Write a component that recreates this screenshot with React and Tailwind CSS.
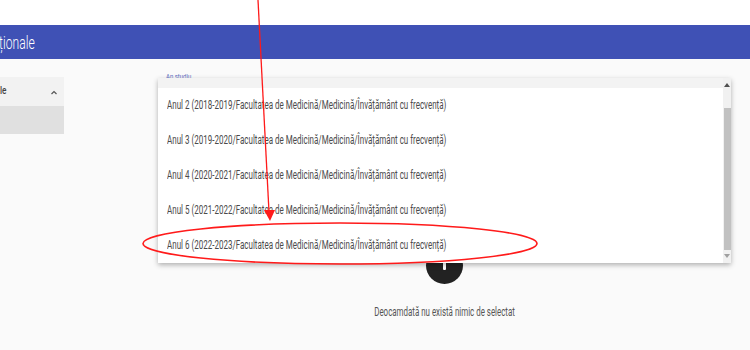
import React from "react";

const options = [
  "Anul 2 (2018-2019/Facultatea de Medicină/Medicină/Învățământ cu frecvență)",
  "Anul 3 (2019-2020/Facultatea de Medicină/Medicină/Învățământ cu frecvență)",
  "Anul 4 (2020-2021/Facultatea de Medicină/Medicină/Învățământ cu frecvență)",
  "Anul 5 (2021-2022/Facultatea de Medicină/Medicină/Învățământ cu frecvență)",
  "Anul 6 (2022-2023/Facultatea de Medicină/Medicină/Învățământ cu frecvență)",
];

const App = () => {
  return (
    <div className="relative w-[750px] h-[350px] overflow-hidden bg-[#fafafa] font-['Roboto',sans-serif]">
      {/* Top white strip */}
      <div className="h-[25px] bg-white" />

      {/* Header */}
      <header className="h-[34px] bg-[#3f51b5] flex items-center">
        <span className="text-white text-[19px] font-light leading-none ml-[-1px] scale-x-[0.64] origin-left whitespace-nowrap">
          ționale
        </span>
      </header>

      {/* Content */}
      <div className="flex pt-[18px]">
        {/* Sidebar */}
        <aside className="w-[64px] flex flex-col">
          <div className="h-[29px] bg-[#f2f2f2] flex items-center justify-between pr-[7px]">
            <span className="text-[11px] text-[#444] font-medium scale-x-[0.75] origin-left">le</span>
            <svg width="6" height="5" viewBox="0 0 6 5" className="mt-[1px]">
              <path d="M0.5 4 L3 1.5 L5.5 4" stroke="#555" strokeWidth="1.2" fill="none" />
            </svg>
          </div>
          <div className="h-[28px] bg-[#e0e0e0]" />
        </aside>

        {/* Main column */}
        <main className="ml-[94px] -mt-[9px] w-[573px] flex flex-col items-center">
          <div className="self-stretch h-[30px] border-b border-[#9e9e9e] px-[8px] pt-[4px]">
            <span className="block text-[8px] leading-[10px] text-[#5c6bc0] scale-x-[0.75] origin-left whitespace-nowrap">
              An studiu
            </span>
          </div>

          {/* Empty state */}
          <div className="mt-[149px] w-[37px] h-[37px] rounded-full bg-[#222] flex flex-col items-center pt-[6px]">
            <span className="w-[3px] h-[17px] bg-white rounded-[1px]" />
          </div>
          <p className="mt-[19px] text-[12px] text-[#555] scale-x-[0.66] whitespace-nowrap">
            Deocamdată nu există nimic de selectat
          </p>
        </main>
      </div>

      {/* Dropdown menu overlay */}
      <div className="absolute left-[158px] top-[78px] w-[573px] h-[185px] bg-white shadow-[0_2px_5px_rgba(0,0,0,0.3)] flex">
        <div className="flex-1 flex flex-col">
          <div className="h-[10px] bg-[#f3f3f3]" />
          {options.map((label) => (
            <div key={label} className="h-[35px] flex items-center pl-[9px]">
              <span className="text-[12.5px] text-[#4a4a4a] scale-x-[0.64] origin-left whitespace-nowrap">
                {label}
              </span>
            </div>
          ))}
        </div>
        {/* Scrollbar */}
        <div className="w-[8px] bg-[#f1f1f1] flex flex-col items-center">
          <svg width="6" height="4" viewBox="0 0 6 4" className="mt-[5px]">
            <path d="M0 4 L3 0 L6 4 Z" fill="#505050" />
          </svg>
          <div className="mt-[21px] w-[7px] h-[142px] bg-[#c1c1c1]" />
          <svg width="6" height="4" viewBox="0 0 6 4" className="mt-[4px]">
            <path d="M0 0 L6 0 L3 4 Z" fill="#a0a0a0" />
          </svg>
        </div>
      </div>

      {/* Red annotation */}
      <svg className="absolute inset-0 pointer-events-none" width="750" height="350">
        <line x1="258" y1="0" x2="269" y2="212" stroke="#ff1a1a" strokeWidth="1.3" />
        <polygon points="264,210 275,210 270,221" fill="#ff1a1a" />
        <ellipse cx="340" cy="243.5" rx="197" ry="20.5" fill="none" stroke="#ff1a1a" strokeWidth="1.6" />
      </svg>
    </div>
  );
};

export default App;
